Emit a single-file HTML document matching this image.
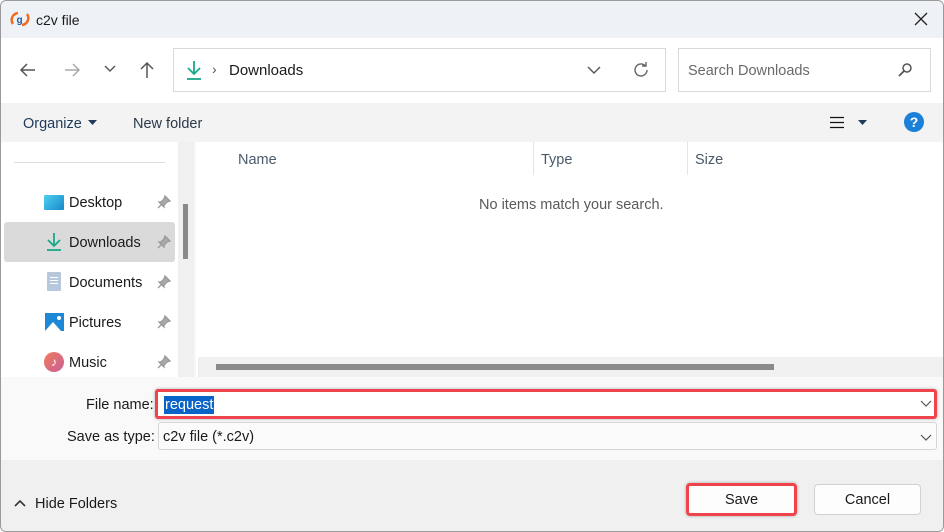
<!DOCTYPE html>
<html><head><meta charset="utf-8"><style>
*{box-sizing:border-box;margin:0;padding:0}
body{width:944px;height:532px;overflow:hidden;background:#fff;font-family:"Liberation Sans",sans-serif;font-size:14px;color:#1a1a1a;position:relative}
.a{position:absolute}
.t{white-space:nowrap}
</style></head><body>
<div class="a" style="left:0;top:0;width:944px;height:532px;border:1px solid #9a9a9a;border-radius:6px;background:#fff"></div>
<div class="a" style="left:1px;top:1px;width:942px;height:37px;background:#eef2f7;border-radius:6px 6px 0 0"></div>
<svg class="a" style="left:10px;top:11px" width="20" height="16" viewBox="0 0 20 16"><path d="M3 13 A7 7 0 0 1 8 2" stroke="#f26b1d" stroke-width="2.5" fill="none"/><path d="M17 3 A7 7 0 0 1 12 14" stroke="#f26b1d" stroke-width="2.5" fill="none"/><text x="6.5" y="12" font-size="10" font-weight="bold" fill="#1a5aa8" font-family="Liberation Sans">g</text></svg>
<div class="a t" style="left:36px;top:12px;font-size:14px">c2v file</div>
<svg class="a" style="left:914px;top:12px" width="14" height="14"><path d="M1 1L13 13M13 1L1 13" stroke="#222" stroke-width="1.3"/></svg>
<svg class="a" style="left:18px;top:60px" width="20" height="20"><path d="M17 10H3M9 4L3 10L9 16" stroke="#555" stroke-width="1.5" fill="none"/></svg>
<svg class="a" style="left:62px;top:60px" width="20" height="20"><path d="M3 10H17M11 4L17 10L11 16" stroke="#aaa" stroke-width="1.5" fill="none"/></svg>
<svg class="a" style="left:103px;top:64px" width="14" height="10"><path d="M2 2L7 7L12 2" stroke="#555" stroke-width="1.4" fill="none"/></svg>
<svg class="a" style="left:137px;top:60px" width="20" height="20"><path d="M10 18V3M4 9L10 3L16 9" stroke="#555" stroke-width="1.5" fill="none"/></svg>
<div class="a" style="left:173px;top:48px;width:493px;height:44px;border:1px solid #d9d9d9"></div>
<svg class="a" style="left:185px;top:59px" width="18" height="22"><path d="M9 2V15M3 9L9 15L15 9" stroke="#18a889" stroke-width="1.8" fill="none"/><path d="M2 20H16" stroke="#18a889" stroke-width="1.8"/></svg>
<div class="a t" style="left:212px;top:61px;color:#555;font-size:14px">›</div>
<div class="a t" style="left:229px;top:62px;font-size:15px">Downloads</div>
<svg class="a" style="left:586px;top:65px" width="16" height="10"><path d="M2 2L8 8L14 2" stroke="#555" stroke-width="1.4" fill="none"/></svg>
<svg class="a" style="left:631px;top:60px" width="20" height="20"><path d="M16 10A6 6 0 1 1 14 5.5M15 2V6H11" stroke="#666" stroke-width="1.4" fill="none"/></svg>
<div class="a" style="left:678px;top:48px;width:253px;height:44px;border:1px solid #d9d9d9"></div>
<div class="a t" style="left:688px;top:63px;color:#6a6a6a;font-size:14.5px">Search Downloads</div>
<svg class="a" style="left:897px;top:62px" width="16" height="16"><circle cx="10" cy="6" r="4" stroke="#555" stroke-width="1.5" fill="none"/><path d="M7 9L2 14" stroke="#555" stroke-width="1.8"/></svg>
<div class="a" style="left:1px;top:103px;width:942px;height:39px;background:#f3f3f3"></div>
<div class="a t" style="left:23px;top:116px;color:#1f3a5a;font-size:14.5px">Organize</div>
<svg class="a" style="left:88px;top:120px" width="9" height="6"><path d="M0 0H9L4.5 5Z" fill="#1f3a5a"/></svg>
<div class="a t" style="left:133px;top:116px;color:#2a3a4a;font-size:14.5px">New folder</div>
<svg class="a" style="left:829px;top:116px" width="16" height="13"><path d="M1 1.5H15M1 6.5H15M1 11.5H15" stroke="#111" stroke-width="1.2"/></svg>
<svg class="a" style="left:858px;top:120px" width="9" height="5"><path d="M0 0H9L4.5 5Z" fill="#1f3a5a"/></svg>
<div class="a" style="left:904px;top:112px;width:20px;height:20px;border-radius:50%;background:#1a80d8;color:#fff;font-weight:bold;font-size:14px;text-align:center;line-height:20px">?</div>
<div class="a" style="left:14px;top:162px;width:151px;height:1px;background:#ddd"></div>
<div class="a" style="left:178px;top:142px;width:16px;height:235px;background:#f0f0f0"></div>
<div class="a" style="left:194px;top:142px;width:2px;height:235px;background:#f7f7f7"></div>
<div class="a" style="left:183px;top:204px;width:5px;height:55px;background:#8a8a8a"></div>
<div class="a" style="left:4px;top:222px;width:171px;height:40px;background:#dadada;border-radius:3px"></div>
<div class="a" style="left:44px;top:195px;width:20px;height:15px;background:linear-gradient(135deg,#4fd0f0,#1888c8);border-radius:1px"></div>
<svg class="a" style="left:45px;top:232px" width="18" height="20"><path d="M9 1V14M3 8L9 14L15 8" stroke="#18a889" stroke-width="1.8" fill="none"/><path d="M2 18H16" stroke="#18a889" stroke-width="1.8"/></svg>
<div class="a" style="left:47px;top:272px;width:14px;height:19px;background:#b8c8dc;border-radius:1px"><div style="margin:5px 3px;height:1px;background:#fff;box-shadow:0 3px #fff,0 6px #fff"></div></div>
<svg class="a" style="left:45px;top:313px" width="19" height="18"><rect width="19" height="18" fill="#1d88d6"/><path d="M0 18L8 9L16 18Z" fill="#fff"/><circle cx="14" cy="5" r="2" fill="#fff"/></svg>
<div class="a" style="left:44px;top:352px;width:20px;height:20px;border-radius:50%;background:linear-gradient(135deg,#f07a5a,#c8609a);color:#fff;font-size:12px;text-align:center;line-height:20px">♪</div>
<div class="a t" style="left:69px;top:195px;font-size:14.5px">Desktop</div>
<div class="a t" style="left:69px;top:235px;font-size:14.5px">Downloads</div>
<div class="a t" style="left:69px;top:275px;font-size:14.5px">Documents</div>
<div class="a t" style="left:69px;top:315px;font-size:14.5px">Pictures</div>
<div class="a t" style="left:69px;top:355px;font-size:14.5px">Music</div>
<svg class="a" style="left:157px;top:195px" width="14" height="14"><path d="M8 1L13 6L10 7L7 10L7 12L2 7L4 7L7 4Z M4 10L1 13" stroke="#999" stroke-width="1.3" fill="#aaa"/></svg>
<svg class="a" style="left:157px;top:235px" width="14" height="14"><path d="M8 1L13 6L10 7L7 10L7 12L2 7L4 7L7 4Z M4 10L1 13" stroke="#999" stroke-width="1.3" fill="#aaa"/></svg>
<svg class="a" style="left:157px;top:275px" width="14" height="14"><path d="M8 1L13 6L10 7L7 10L7 12L2 7L4 7L7 4Z M4 10L1 13" stroke="#999" stroke-width="1.3" fill="#aaa"/></svg>
<svg class="a" style="left:157px;top:315px" width="14" height="14"><path d="M8 1L13 6L10 7L7 10L7 12L2 7L4 7L7 4Z M4 10L1 13" stroke="#999" stroke-width="1.3" fill="#aaa"/></svg>
<svg class="a" style="left:157px;top:355px" width="14" height="14"><path d="M8 1L13 6L10 7L7 10L7 12L2 7L4 7L7 4Z M4 10L1 13" stroke="#999" stroke-width="1.3" fill="#aaa"/></svg>
<div class="a t" style="left:238px;top:152px;color:#4a5a6a;font-size:14.5px">Name</div>
<div class="a" style="left:533px;top:142px;width:1px;height:33px;background:#e5e5e5"></div>
<div class="a t" style="left:541px;top:152px;color:#4a5a6a;font-size:14.5px">Type</div>
<div class="a" style="left:687px;top:142px;width:1px;height:33px;background:#e5e5e5"></div>
<div class="a t" style="left:695px;top:152px;color:#4a5a6a;font-size:14.5px">Size</div>
<div class="a t" style="left:479px;top:197px;color:#5a5a5a;font-size:14.5px">No items match your search.</div>
<div class="a" style="left:198px;top:357px;width:745px;height:20px;background:#f0f0f0"></div>
<div class="a" style="left:216px;top:364px;width:558px;height:6px;background:#8a8a8a"></div>
<div class="a" style="left:1px;top:377px;width:942px;height:83px;background:#f9f9f9"></div>
<div class="a" style="left:1px;top:460px;width:942px;height:71px;background:#f0f0f0;border-radius:0 0 6px 6px"></div>
<div class="a t" style="left:86px;top:397px;font-size:14.5px">File name:</div>
<div class="a t" style="left:67px;top:429px;font-size:14.5px">Save as type:</div>
<div class="a" style="left:155px;top:389px;width:782px;height:30px;background:#fff;border:3px solid #f0444c;border-radius:3px;box-shadow:0 0 3px rgba(0,0,0,.3)"></div>
<div class="a t" style="left:164px;top:396px;height:18px;background:#0a64c8;color:#fff;font-size:14.5px;line-height:18px;padding:0 1px">request</div>
<svg class="a" style="left:920px;top:400px" width="12" height="8"><path d="M1 1L6 6L11 1" stroke="#555" stroke-width="1.2" fill="none"/></svg>
<div class="a" style="left:158px;top:422px;width:779px;height:28px;background:#fbfbfb;border:1px solid #d5d5d5;border-radius:3px"></div>
<div class="a t" style="left:163px;top:429px;font-size:14.5px">c2v file (*.c2v)</div>
<svg class="a" style="left:920px;top:434px" width="12" height="8"><path d="M1 1L6 6L11 1" stroke="#555" stroke-width="1.2" fill="none"/></svg>
<svg class="a" style="left:14px;top:499px" width="12" height="8"><path d="M1 7L6 2L11 7" stroke="#333" stroke-width="1.6" fill="none"/></svg>
<div class="a t" style="left:35px;top:496px;font-size:14.5px">Hide Folders</div>
<div class="a" style="left:686px;top:483px;width:111px;height:33px;background:#fdfdfd;border:3px solid #f0444c;border-radius:4px;box-shadow:0 0 3px rgba(0,0,0,.3);text-align:center;line-height:29px;font-size:14.5px">Save</div>
<div class="a" style="left:814px;top:484px;width:107px;height:31px;background:#fdfdfd;border:1px solid #d0d0d0;border-radius:4px;text-align:center;line-height:31px;font-size:14.5px">Cancel</div>
</body></html>
